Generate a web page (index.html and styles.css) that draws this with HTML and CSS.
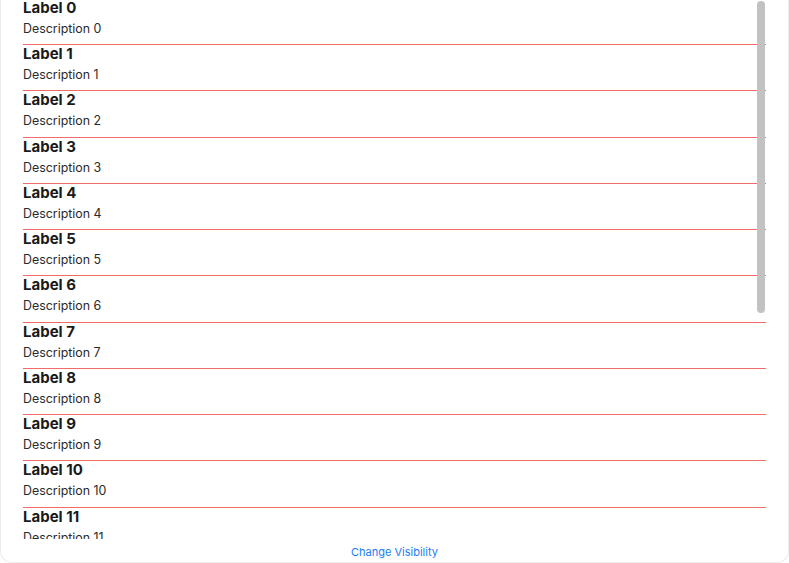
FILE: index.html
```html
<!DOCTYPE html>
<html>
<head>
<meta charset="utf-8">
<link rel="stylesheet" href="styles.css">
</head>
<body>
<div class="window">
  <div class="scroller">
    <div class="list">
      <div class="row"><div class="label">Label 0</div><div class="desc">Description 0</div></div>
      <div class="row"><div class="label">Label 1</div><div class="desc">Description 1</div></div>
      <div class="row"><div class="label">Label 2</div><div class="desc">Description 2</div></div>
      <div class="row"><div class="label">Label 3</div><div class="desc">Description 3</div></div>
      <div class="row"><div class="label">Label 4</div><div class="desc">Description 4</div></div>
      <div class="row"><div class="label">Label 5</div><div class="desc">Description 5</div></div>
      <div class="row"><div class="label">Label 6</div><div class="desc">Description 6</div></div>
      <div class="row"><div class="label">Label 7</div><div class="desc">Description 7</div></div>
      <div class="row"><div class="label">Label 8</div><div class="desc">Description 8</div></div>
      <div class="row"><div class="label">Label 9</div><div class="desc">Description 9</div></div>
      <div class="row"><div class="label">Label 10</div><div class="desc">Description 10</div></div>
      <div class="row"><div class="label">Label 11</div><div class="desc">Description 11</div></div>
      <div class="row"><div class="label">Label 12</div><div class="desc">Description 12</div></div>
    </div>
    <div class="scrollbar"></div>
  </div>
  <div class="footer"><span class="link">Change Visibility</span></div>
</div>
</body>
</html>
```

FILE: styles.css
```css
html, body {
  margin: 0;
  padding: 0;
  background: #ffffff;
}
body {
  font-family: Inter, "Noto Sans", sans-serif;
  color: #1d1d1f;
}
.window {
  width: 789px;
  height: 563px;
  box-sizing: border-box;
  border: 1px solid #ececec;
  border-top: none;
  border-radius: 0 0 12px 12px;
  display: flex;
  flex-direction: column;
  overflow: hidden;
  background: #fff;
}
.scroller {
  position: relative;
  height: 539px;
  overflow: hidden;
  flex: none;
}
.list {
  margin: -1.25px 22px 0 22px;
}
.row {
  height: 46.25px;
  box-sizing: border-box;
  border-bottom: 1px solid #f26a6a;
  display: flex;
  flex-direction: column;
}
.label {
  font-size: 15px;
  font-weight: 700;
  line-height: 18px;
  height: 18px;
  color: #1a1a1a;
}
.desc {
  margin-top: 4px;
  font-size: 12.4px;
  line-height: 16px;
  color: #2a2a2a;
}
.scrollbar {
  position: absolute;
  left: 756px;
  top: 1px;
  width: 8px;
  height: 312px;
  border-radius: 4px;
  background: #c2c2c2;
}
.footer {
  flex: 1;
  display: flex;
  justify-content: center;
  align-items: center;
}
.link {
  font-size: 11px;
  color: #1a7cf5;
  margin-top: 3px;
}
```
